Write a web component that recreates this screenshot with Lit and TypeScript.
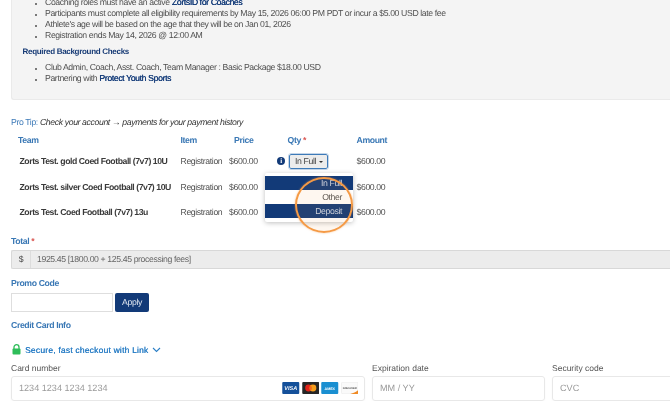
import { LitElement, html, css } from "lit";
import { customElement } from "lit/decorators.js";

const rows = [
  "Zorts Test. gold Coed Football (7v7) 10U",
  "Zorts Test. silver Coed Football (7v7) 10U",
  "Zorts Test. Coed Football (7v7) 13u",
];

@customElement("app-root")
export class AppRoot extends LitElement {
  static styles = css`
    :host { display: block; width: 670px; height: 401px; overflow: hidden; background: #fff; position: relative;
      font-family: "Liberation Sans", Arial, sans-serif; font-size: 8.7px; letter-spacing: -0.38px; color: #505050; text-rendering: geometricPrecision; }
    .page { filter: blur(0.35px); height: 401px; overflow: hidden; position: relative; }
    .panel { margin: -3px 0 0 11px; height: 103px; background: #f4f4f4; border: 1px solid #eaeaea; border-right: 0; border-top: 0; border-radius: 0 0 0 3px; box-sizing: border-box; }
    ul { margin: 0; padding: 0 0 0 33px; list-style: disc; line-height: 11px; }
    li { height: 11px; white-space: nowrap; }
    li::marker { font-size: 7px; }
    a { color: #123a78; text-shadow: 0.25px 0 0 #123a78; }
    h4 { margin: 5px 0 5px 10.5px; font-size: 8px; letter-spacing: -0.3px; line-height: 11px; color: #163a75; font-weight: 700; }
    .tip { margin: 17px 0 0 11px; line-height: 11px; color: #333; }
    .tip span { color: #3d7ab8; }
    .tip em { font-style: italic; }
    .table { display: grid; grid-template-columns: 161.5px 53.5px 54px 68.5px 60px; margin: 1px 0 0 19px; width: 398px; position: relative; }
    .th { height: 21px; line-height: 22px; font-weight: 700; color: #3a78b5; white-space: nowrap; }
    .th.team { margin-left: -1px; }
    .th.q { margin-left: -0.5px; }
    .td { height: 25.5px; line-height: 22px; white-space: nowrap; }
    .td.price { margin-left: -5px; }
    .b { font-weight: 700; color: #3a3a3a; margin-left: 0.5px; letter-spacing: -0.45px; }
    .req { color: #d9534f; }
    .qty { display: flex; align-items: center; height: 25.5px; padding-bottom: 3px; box-sizing: border-box; margin-left: -11px; gap: 4px; }
    .info { width: 8px; height: 8px; border-radius: 50%; background: #123a78; color: #fff; font: 700 7px/8px "Liberation Serif", serif; text-align: center; }
    .sel { width: 39px; height: 15px; box-sizing: border-box; border: 1px solid #3d7ab8; outline: 1px solid #c4d5e8; border-radius: 2px; background: #ececec; color: #444; line-height: 13px; padding-left: 5px; white-space: nowrap; }
    .sel i { display: inline-block; width: 0; height: 0; border: 2px solid transparent; border-top: 2.5px solid #333; border-bottom: 0; vertical-align: 1px; margin-left: 1px; }
    .menu { position: absolute; left: 246px; top: 43.5px; width: 88px; background: #fff; box-shadow: 0 1px 5px rgba(0,0,0,.25); border-radius: 2px; padding: 3px 0 4px; text-align: right; line-height: 14px; z-index: 2; }
    .menu div { height: 14px; padding-right: 11px; color: #555; }
    .menu .on { background: #123a78; color: #cbd6e6; }
    .ring { position: absolute; left: 295px; top: 177px; width: 58px; height: 56px; box-sizing: border-box; border: 2.5px solid #f59a45; border-radius: 50%; background: rgba(245,154,69,.08); box-shadow: 0 0 2px rgba(245,154,69,.6); z-index: 3; pointer-events: none; }
    label { display: block; color: #3a78b5; font-weight: 700; line-height: 11px; }
    .total { margin: 9.5px 0 0 11px; }
    .group { display: flex; height: 19px; box-sizing: border-box; margin-top: 3px; border: 1px solid #d8d8d8; border-right: 0; border-radius: 2px 0 0 2px; background: #ececec; line-height: 17px; }
    .group b { width: 18px; font-weight: 400; text-align: center; border-right: 1px solid #dcdcdc; color: #444; }
    .group span { padding-left: 6px; color: #666; }
    .promo { margin: 9px 0 0 11px; }
    .promo-row { display: flex; gap: 2px; margin-top: 3.5px; }
    .inp { width: 102px; height: 19px; box-sizing: border-box; border: 1px solid #dedede; background: #fff; }
    .btn { width: 34px; height: 19px; box-sizing: border-box; background: #123a78; color: #dde4ef; border-radius: 2px; text-align: center; line-height: 19px; }
    .cc { margin: 8.5px 0 0 11px; }
    .link { display: flex; align-items: center; gap: 4px; margin: 12.5px 0 0 12px; height: 12px; color: #2b7fc6; font-size: 8.5px; letter-spacing: .2px; text-shadow: 0.2px 0 0 #2b7fc6; white-space: nowrap; }
    .link svg { display: block; }
    .card { display: grid; grid-template-columns: 354px 173px 130px; column-gap: 7px; margin: 7.5px 0 0 11px; width: 671px; }
    .card label { font-weight: 400; color: #555; font-size: 8.5px; letter-spacing: 0; }
    .f { margin-top: 1.5px; height: 25px; box-sizing: border-box; border: 1px solid #e8e8e8; border-radius: 3px; padding-left: 7px; color: #9a9a9a; font-size: 9.1px; letter-spacing: 0; display: flex; align-items: center; box-shadow: 0 1px 2px rgba(0,0,0,.03); }
    .brands { margin-left: auto; margin-right: 6px; display: flex; gap: 2px; }
    .brands svg { display: block; }
  `;

  render() {
    return html`
      <div class="page">
        <div class="panel">
          <ul>
            <li>Coaching roles must have an active <a>ZortsID for Coaches</a></li>
            <li>Participants must complete all eligibility requirements by May 15, 2026 06:00 PM PDT or incur a $5.00 USD late fee</li>
            <li>Athlete's age will be based on the age that they will be on Jan 01, 2026</li>
            <li>Registration ends May 14, 2026 @ 12:00 AM</li>
          </ul>
          <h4>Required Background Checks</h4>
          <ul>
            <li>Club Admin, Coach, Asst. Coach, Team Manager : Basic Package $18.00 USD</li>
            <li>Partnering with <a>Protect Youth Sports</a></li>
          </ul>
        </div>
        <div class="tip"><span>Pro Tip:</span> <em>Check your account → payments for your payment history</em></div>
        <div class="table">
          <div class="th team">Team</div><div class="th">Item</div><div class="th">Price</div>
          <div class="th q">Qty <span class="req">*</span></div><div class="th">Amount</div>
          ${rows.map((r, i) => html`
            <div class="td b">${r}</div>
            <div class="td">Registration</div>
            <div class="td price">$600.00</div>
            ${i === 0
              ? html`<div class="qty"><span class="info">i</span><div class="sel">In Full <i></i></div></div>`
              : html`<div></div>`}
            <div class="td">$600.00</div>
          `)}
          <div class="menu">
            <div class="on">In Full</div>
            <div>Other</div>
            <div class="on">Deposit</div>
          </div>
        </div>
        <div class="total">
          <label>Total <span class="req">*</span></label>
          <div class="group"><b>$</b><span>1925.45 [1800.00 + 125.45 processing fees]</span></div>
        </div>
        <div class="promo">
          <label>Promo Code</label>
          <div class="promo-row"><div class="inp"></div><div class="btn">Apply</div></div>
        </div>
        <label class="cc">Credit Card Info</label>
        <div class="link">
          <svg width="9" height="11" viewBox="0 0 9 11"><path d="M2 5V3.2a2.5 2.5 0 0 1 5 0V5" fill="none" stroke="#2ebd59" stroke-width="1.3"/><rect x="0.5" y="4.5" width="8" height="6" rx="1" fill="#2ebd59"/></svg>
          <span>Secure, fast checkout with Link</span>
          <svg width="9" height="6" viewBox="0 0 9 6"><path d="M1 1l3.5 3.5L8 1" fill="none" stroke="#2b7fc6" stroke-width="1.1"/></svg>
        </div>
        <div class="card">
          <div>
            <label>Card number</label>
            <div class="f">1234 1234 1234 1234
              <div class="brands">
                <svg width="17.5" height="12" viewBox="0 0 17 12"><rect width="17" height="12" rx="1" fill="#14509a"/><text x="8.5" y="8.3" font-size="5.5" font-weight="700" font-style="italic" fill="#fff" text-anchor="middle" font-family="Liberation Sans">VISA</text></svg>
                <svg width="17.5" height="12" viewBox="0 0 17 12"><rect width="17" height="12" rx="1" fill="#262626"/><circle cx="6.3" cy="6" r="3.4" fill="#e2231a"/><circle cx="10.7" cy="6" r="3.4" fill="#f79e1b"/><path d="M8.5 3.4a3.4 3.4 0 0 1 0 5.2a3.4 3.4 0 0 1 0-5.2z" fill="#f26a1c"/></svg>
                <svg width="17.5" height="12" viewBox="0 0 17 12"><rect width="17" height="12" rx="1" fill="#1a8fd1"/><text x="8.5" y="7.6" font-size="3.6" font-weight="700" fill="#fff" text-anchor="middle" font-family="Liberation Sans">AMEX</text></svg>
                <svg width="17.5" height="12" viewBox="0 0 17 12"><rect x=".25" y=".25" width="16.5" height="11.5" rx="1" fill="#fafafa" stroke="#e4e4e4" stroke-width=".5"/><text x="8.5" y="7" font-size="2.7" font-weight="700" fill="#444" text-anchor="middle" font-family="Liberation Sans">DISCOVER</text><path d="M9 12c3-1 6-2 8-4v3a1 1 0 0 1-1 1z" fill="#f08a24"/></svg>
              </div>
            </div>
          </div>
          <div><label>Expiration date</label><div class="f">MM / YY</div></div>
          <div><label>Security code</label><div class="f">CVC</div></div>
        </div>
        <div class="ring"></div>
      </div>
    `;
  }
}
